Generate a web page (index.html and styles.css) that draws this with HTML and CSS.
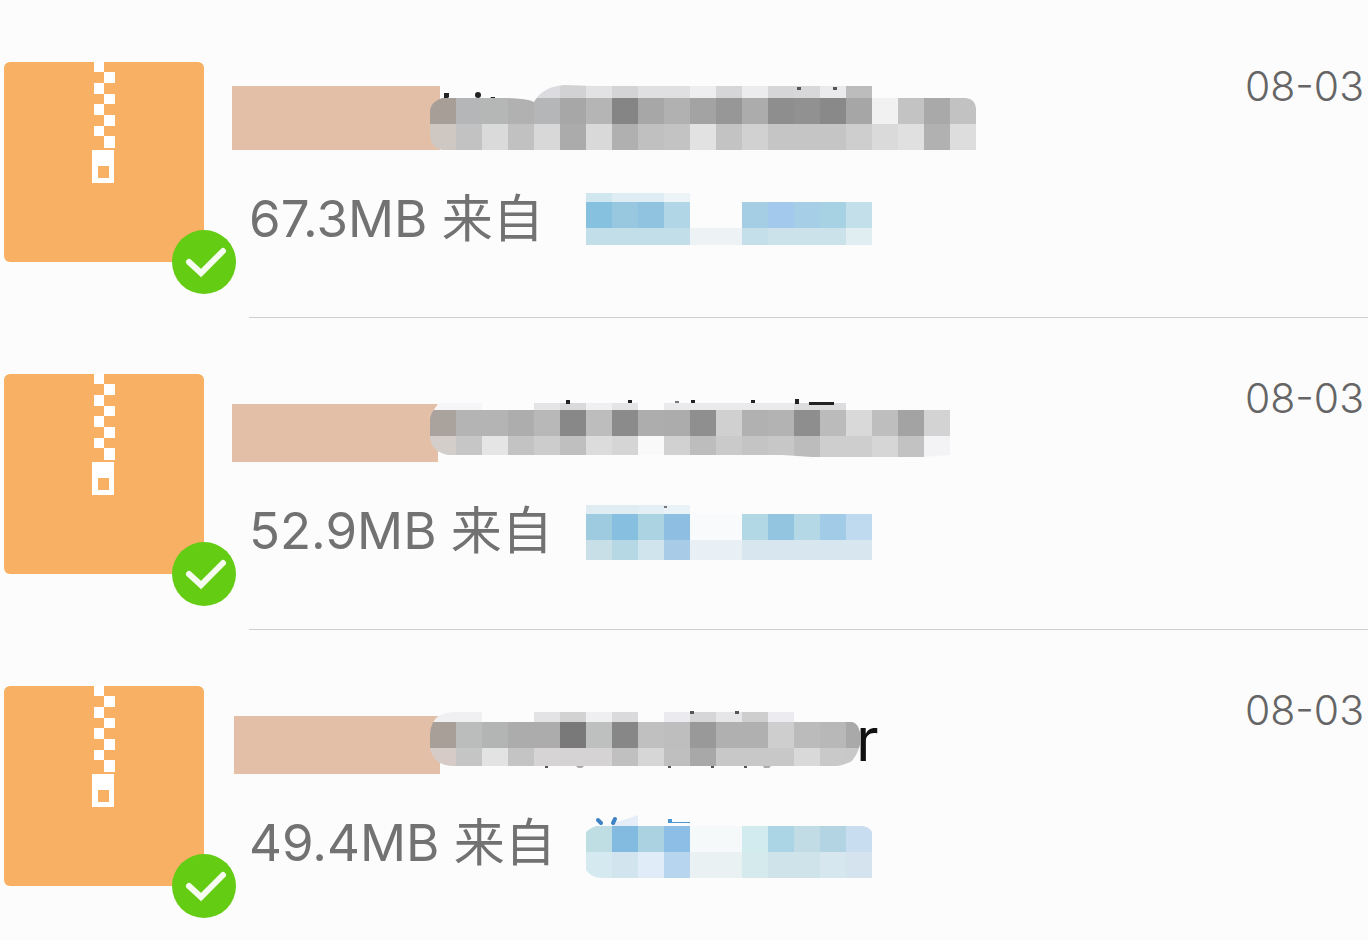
FILE: index.html
```html
<!DOCTYPE html>
<html lang="zh-CN">
<head>
    <meta charset="UTF-8">
    <meta name="viewport" content="width=device-width, initial-scale=1.0">
    <title>文件</title>
    <link rel="stylesheet" href="styles.css">
</head>
<body>
    <svg class="defs" aria-hidden="true">
        <symbol id="zip" viewBox="0 0 232 232">
            <rect width="200" height="200" rx="6" fill="#f8b164"/>
            <path fill="#fff" d="M90 0h10v10h-10zM100 10h11v11h-11zM90 21h10v11h-10zM100 32h11v10h-11zM90 42h10v11h-10zM100 53h11v11h-11zM90 64h10v10h-10zM100 74h11v12h-11z"/>
            <path fill="#fff" fill-rule="evenodd" d="M88 88h22v33h-22zM94 104v12h11v-12z"/>
            <circle cx="200" cy="200" r="32" fill="#65cc14"/>
            <path d="M185 200l12 11 22-22" fill="none" stroke="#f6fdf0" stroke-width="6" stroke-linecap="round"/>
        </symbol>
        <clipPath id="name-clip-1">
            <path d="M198 32q1-8 12-12h62q22 0 30 4 8-15 30-17l30 1h278v12h94q9 1 10 10v42h-534q-12-3-12-16z"/>
        </clipPath>
        <clipPath id="name-clip-2">
            <path d="M198 28q2-8 10-15h510v52l-28 2h-110l-30-2h-334q-16-3-18-17z"/>
        </clipPath>
        <clipPath id="name-clip-3">
            <path d="M198 32q1-14 10-19 8-3 14-3h340v10h58q6 0 9 14 0 14-9 25-10 5-16 5h-382q-20 0-24-17z"/>
        </clipPath>
        <clipPath id="from-clip-3">
            <path d="M0 22q8-7 16-7 18-3 36-10v10h104v-1q-1 2 2 2h118q8 1 10 6v46h-270q-10 0-16-8z"/>
        </clipPath>
    </svg>

    <ul class="file-list">
        <li class="file">
            <svg class="file-icon" role="img" aria-label="zip"><use href="#zip"/></svg>
            <div class="file-body">
                <div class="file-text">
                    <svg class="file-name" viewBox="0 0 760 90" aria-hidden="true">
                        <path fill="#e4bfa8" d="M0 8h208v64h-208z"/>
                        <path fill="#222" d="M212 15h5v4l-2 2h-3zM259 19h4v2h-5z"/>
                        <circle cx="246" cy="17" r="3" fill="#222"/>
                        <g clip-path="url(#name-clip-1)" data-mosaic="name1"></g>
                        <path fill="#555" d="M565 9h4v3h-4zM601 9h4v3h-4z"/>
                    </svg>
                    <div class="file-detail">
                        <span class="file-size">67.3MB 来自</span>
                        <svg class="file-from" viewBox="0 0 286 72" aria-hidden="true"><g data-mosaic="from1"></g></svg>
                    </div>
                </div>
                <time class="file-date" datetime="08-03">08-03</time>
            </div>
        </li>
        <li class="file">
            <svg class="file-icon" role="img" aria-label="zip"><use href="#zip"/></svg>
            <div class="file-body">
                <div class="file-text">
                    <svg class="file-name" viewBox="0 0 760 90" aria-hidden="true">
                        <path fill="#e4bfa8" d="M0 14h206v58h-206z"/>
                        <path fill="#fcfcfd" d="M206 14v6h-4z"/>
                        <g clip-path="url(#name-clip-2)" data-mosaic="name2"></g>
                        <path fill="#222" d="M334 10h4v4h-4zM396 10h4v3h-4zM459 10h4v3h-4zM519 10h4v3h-4zM563 9h4v5h-4zM577 12h25v3h-25z"/>
                        <path fill="#777" d="M443 11h4v2h-4z"/>
                    </svg>
                    <div class="file-detail">
                        <span class="file-size">52.9MB 来自</span>
                        <svg class="file-from" viewBox="0 0 286 72" aria-hidden="true"><g data-mosaic="from2"></g><path fill="#777" d="M78 8h3v2h-3z"/></svg>
                    </div>
                </div>
                <time class="file-date" datetime="08-03">08-03</time>
            </div>
        </li>
        <li class="file">
            <svg class="file-icon" role="img" aria-label="zip"><use href="#zip"/></svg>
            <div class="file-body">
                <div class="file-text">
                    <svg class="file-name" viewBox="0 0 760 90" aria-hidden="true">
                        <path fill="#e4bfa8" d="M2 14h206v58h-206z"/>
                        <path fill="#fcfcfd" d="M208 14v6h-5z"/>
                        <text class="name-tail" x="624" y="59">r</text>
                        <g clip-path="url(#name-clip-3)" data-mosaic="name3"></g>
                        <path fill="#555" d="M458 9h4v3h-4zM503 9h4v3h-4zM313 64h3v2h-3zM436 64h3v2h-3zM479 64h3v2h-3zM512 64h3v2h-3z"/>
                        <path fill="#aaa" d="M344 64h8l-2 2h-4zM531 64h8l-2 2h-5z"/>
                    </svg>
                    <div class="file-detail">
                        <span class="file-size">49.4MB 来自</span>
                        <svg class="file-from" viewBox="0 0 286 72" aria-hidden="true">
                            <g clip-path="url(#from-clip-3)" data-mosaic="from3"></g>
                            <path d="M12 10l3 3M29 9l-2 4" stroke="#3d83c6" stroke-width="4" stroke-linecap="round"/>
                            <path fill="#4a97d3" d="M82 9h4v3h18v1h-22z"/>
                        </svg>
                    </div>
                </div>
                <time class="file-date" datetime="08-03">08-03</time>
            </div>
        </li>
    </ul>

    <script src="script.js"></script>
</body>
</html>
```
FILE: styles.css
```css
* {
    box-sizing: border-box;
}
body {
    margin: 0;
    padding-top: 6px;
    background-color: #fcfcfd;
    color: #666565;
    font-family: Inter, "Noto Sans CJK SC", sans-serif;
    font-weight: 300;
}
.defs {
    position: absolute;
    width: 0;
    height: 0;
}
.file-list {
    list-style: none;
    margin: 0;
    padding: 0;
}
.file {
    display: flex;
    gap: 13px;
    padding-left: 4px;
}
.file-icon {
    flex: none;
    width: 232px;
    height: 232px;
    margin-top: 56px;
}
.file-body {
    flex: 1;
    min-width: 0;
    display: flex;
    justify-content: space-between;
    padding: 56px 4px 59px 0;
    border-bottom: 1px solid #cfcfcf;
}
.file:last-child .file-body {
    padding-bottom: 40px;
    border-bottom: none;
}
.file-text {
    padding-top: 16px;
}
.file-name {
    display: block;
    width: 760px;
    height: 90px;
    margin-left: -17px;
}
.name-tail {
    font-size: 60px;
    font-weight: 400;
    fill: #111;
}
.file-detail {
    display: flex;
    margin-top: 18px;
}
.file-size {
    min-width: 337px;
    color: #737272;
    font-size: 51px;
    font-weight: 400;
    line-height: 66px;
    white-space: nowrap;
}
.file-from {
    flex: none;
    width: 286px;
    height: 72px;
}
.file-date {
    font-size: 41px;
    line-height: 49px;
    white-space: nowrap;
}
```
FILE: script.js
```js
// each band: [x, y, height, colours], one colour per 26px cell, '-' leaves it empty
const CELL = 26;
const mosaics = {
    name1: [
        [302, 7, 13, 'dcdce0 d2d2d4 e2e2e5 d4d4d6 e0e0e3 e0e0e3 eeeef1 d6d6d8 ececef d6d6d9 d8d8da ebebee bcbcbc'],
        [198, 20, 26, 'a89e98 b5b6b7 b5b6b6 b1b1b1 b5b6b7 a7a7a7 b5b5b5 858585 a7a7a7 b1b1b1 a3a3a3 979797 acacac 8e8e8e 919191 898989 a6a6a6 f1f1f2 c3c3c3 a9a9a9 c2c2c2'],
        [198, 46, 26, 'cfc8c2 c2c2c2 dadadb c1c1c1 d8d8d8 ababab d9d9da b0b0b0 c0c0c0 c3c3c3 e2e2e2 c3c3c3 d1d1d1 c5c5c5 c5c5c5 c5c5c5 cecece dadada e0e0e1 b1b1b1 dddddd']
    ],
    name2: [
        [198, 13, 7, 'f6f6f8 f6f6f8 - - e4e4e7 d9d9db f0f0f2 e4e4e7 - eaeaed eaeaed eaeaed eaeaed eaeaed dcdcdf dcdcdf'],
        [198, 20, 26, 'aaa29c b4b4b4 b4b4b4 adadad b8b8b8 888888 bdbdbd 8b8b8b adadad acacac 8f8f8f d0d0d0 b1b1b1 b3b3b3 8e8e8e bbbbbb d9d9d9 bebebe a3a3a3 d3d3d3'],
        [198, 46, 21, 'd3ceca c6c6c6 e5e5e6 c3c3c3 cccccc bfbfbf dcdcdc d5d5d5 f9f9fa d1d1d1 bdbdbd cacaca c4c4c4 c7c7c7 bcbcbc cecece cecece d6d6d6 c2c2c2 f3f3f5']
    ],
    name3: [
        [198, 10, 10, 'f0f0f2 f0f0f2 - - e3e3e6 d2d2d3 efeff2 dadadc - ebebef d6d6d8 e6e6e9 cecece ececf0'],
        [198, 20, 26, 'a89f98 bbbcbc b3b4b4 acacac acacac 797979 bebfbf 878787 c0c0c0 bebebe 999999 b0b0b0 b0b0b0 cecece bbbbbb b8b8b8 a9a9a9'],
        [198, 46, 18, 'd6cbc6 c5c5c6 e3e3e4 c4c4c5 d6d4d5 d5d3d4 d5d3d4 c0c0c0 d6d6d7 bfbfbf a8a8a8 c8c8c8 c8c8c8 c8c8c8 d9d9da c9c9c9 c8c8c8']
    ],
    from1: [
        [0, 7, 9, 'd0e7f0 deedf4 deedf4 ecf4f8'],
        [0, 16, 26, '86c1e0 98c7e0 8fc3e0 b1d6e6 - - a5cde4 a3c9ec a6cee6 a7d2e4 c3dfea'],
        [0, 42, 17, 'c2dee8 c2dee8 c2dee8 c2dee8 edf2f4 edf2f4 c4dfea cce2eb cce2eb cce2eb e0eef2']
    ],
    from2: [
        [0, 7, 9, 'dfecf2 dfecf2 e3eff5 e8f2f7'],
        [0, 16, 26, '9fcbe0 87bfe1 acd3e1 8ebfe3 f9fafb f9fafb b1d8e4 93c5e1 b4d8e5 a2cbe7 bfdaef'],
        [0, 42, 20, 'c9dfe7 b6d7e4 cfe4ec a8cbe8 e8eff5 e8eff5 d7e6ef d7e6ef d7e6ef d7e6ef d7e6ef']
    ],
    from3: [
        [26, 5, 11, 'e5eef8'],
        [0, 16, 26, 'bfdee4 83bbe0 aad2e1 8cbee6 f6f9f9 f6f9f9 d2ebee abd5e5 c1dce5 b3d5e3 c8ddf0'],
        [0, 42, 26, 'd5e9f0 d2e5ee e0edf8 b8d5f0 e9f1f3 e9f1f3 d5eaed cfe4ea cfe4ea d6e7ef d4e3ed']
    ]
};

document.querySelectorAll('[data-mosaic]').forEach((group) => {
    mosaics[group.dataset.mosaic].forEach(([x, y, height, colours]) => {
        colours.split(' ').forEach((colour, i) => {
            if (colour === '-') return;
            const rect = document.createElementNS('http://www.w3.org/2000/svg', 'rect');
            rect.setAttribute('x', x + i * CELL);
            rect.setAttribute('y', y);
            rect.setAttribute('width', CELL);
            rect.setAttribute('height', height);
            rect.setAttribute('fill', '#' + colour);
            group.appendChild(rect);
        });
    });
});
```
